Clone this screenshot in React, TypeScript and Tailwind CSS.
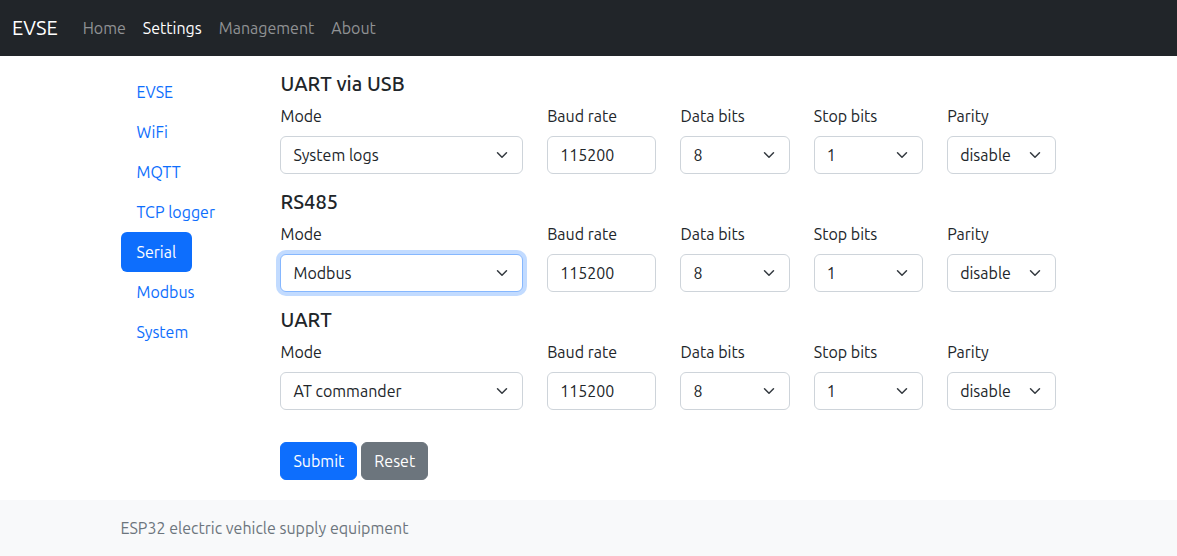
import { useId, useState } from "react";

const navLinks = ["Home", "Settings", "Management", "About"];
const sections = ["EVSE", "WiFi", "MQTT", "TCP logger", "Serial", "Modbus", "System"];
const modes = ["None", "System logs", "AT commander", "Modbus"];

const controlClass =
  "block h-[38px] w-full appearance-none rounded-md border bg-white pl-3 text-[#212529] outline-none";

function Chevron() {
  return (
    <svg
      viewBox="0 0 16 16"
      className="pointer-events-none absolute inset-y-0 right-[13px] my-auto h-3 w-4"
      fill="none"
      stroke="#343a40"
      strokeWidth="2"
      strokeLinecap="round"
      strokeLinejoin="round"
      aria-hidden="true"
    >
      <path d="m2 5 6 6 6-6" />
    </svg>
  );
}

type SelectFieldProps = {
  label: string;
  initial: string;
  options: string[];
  wide?: boolean;
  focused?: boolean;
};

function SelectField({ label, initial, options, wide, focused }: SelectFieldProps) {
  const id = useId();
  const [value, setValue] = useState(initial);
  return (
    <div className={`px-3 ${wide ? "w-1/3" : "w-1/6"}`}>
      <label htmlFor={id} className="mb-2 block">
        {label}
      </label>
      <div className="relative">
        <select
          id={id}
          value={value}
          onChange={(e) => setValue(e.target.value)}
          className={`${controlClass} pr-9 ${
            focused ? "border-[#86b7fe] ring-4 ring-[#c2dbff]" : "border-[#ced4da]"
          }`}
        >
          {options.map((o) => (
            <option key={o}>{o}</option>
          ))}
        </select>
        <Chevron />
      </div>
    </div>
  );
}

function BaudField() {
  const id = useId();
  return (
    <div className="w-1/6 px-3">
      <label htmlFor={id} className="mb-2 block">
        Baud rate
      </label>
      <input id={id} defaultValue="115200" className={`${controlClass} border-[#ced4da] pr-3`} />
    </div>
  );
}

function SerialPort({ title, mode, focused }: { title: string; mode: string; focused?: boolean }) {
  return (
    <section className="mb-4">
      <h5 className="mb-2 text-[20px] leading-6 font-medium">{title}</h5>
      <div className="-mx-3 flex">
        <SelectField label="Mode" initial={mode} options={modes} wide focused={focused} />
        <BaudField />
        <SelectField label="Data bits" initial="8" options={["5", "6", "7", "8"]} />
        <SelectField label="Stop bits" initial="1" options={["1", "1.5", "2"]} />
        <SelectField label="Parity" initial="disable" options={["disable", "even", "odd"]} />
      </div>
    </section>
  );
}

export default function App() {
  return (
    <div className="flex min-h-screen flex-col bg-white font-['Ubuntu','Noto_Sans',sans-serif] text-[16px] leading-6 text-[#212529]">
      <nav className="flex h-14 items-center gap-px bg-[#212529] px-3">
        <a href="#" className="mr-4 text-[20px] text-white">
          EVSE
        </a>
        {navLinks.map((name) => (
          <a
            key={name}
            href="#"
            className={`px-2 py-2 ${name === "Settings" ? "text-white" : "text-[#909294]"}`}
          >
            {name}
          </a>
        ))}
      </nav>

      <main className="mx-auto flex w-full max-w-[960px] pt-4 pb-5">
        <ul className="flex w-1/6 flex-col items-start px-3">
          {sections.map((name) => (
            <li key={name}>
              <a
                href="#"
                className={`block rounded-md px-4 py-2 whitespace-nowrap ${
                  name === "Serial" ? "bg-[#0d6efd] text-white" : "text-[#0d6efd]"
                }`}
              >
                {name}
              </a>
            </li>
          ))}
        </ul>

        <form className="w-5/6 px-3" onSubmit={(e) => e.preventDefault()}>
          <SerialPort title="UART via USB" mode="System logs" />
          <SerialPort title="RS485" mode="Modbus" focused />
          <SerialPort title="UART" mode="AT commander" />
          <div className="mt-8 flex gap-1">
            <button
              type="submit"
              className="h-[38px] rounded-md border border-[#0d6efd] bg-[#0d6efd] px-3 text-white"
            >
              Submit
            </button>
            <button
              type="reset"
              className="h-[38px] rounded-md border border-[#6c757d] bg-[#6c757d] px-3 text-white"
            >
              Reset
            </button>
          </div>
        </form>
      </main>

      <footer className="mt-auto bg-[#f8f9fa] py-4 text-[#6c757d]">
        <div className="mx-auto w-full max-w-[960px] px-3">ESP32 electric vehicle supply equipment</div>
      </footer>
    </div>
  );
}
